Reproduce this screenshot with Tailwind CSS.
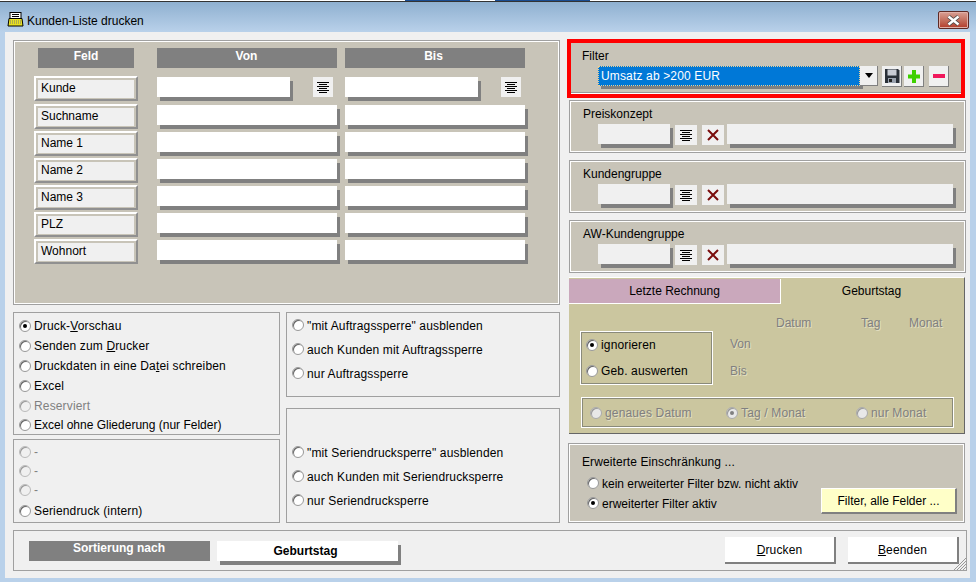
<!DOCTYPE html>
<html><head><meta charset="utf-8"><script src="https://cdn.jsdelivr.net/npm/@tailwindcss/browser@4"></script></head>
<body class="m-0 w-[976px] h-[582px] overflow-hidden bg-[#b9d1ea] font-['Liberation_Sans',Arial,sans-serif] text-[12px] leading-[14px] text-black">
<div class="h-[2px] bg-white border-b border-[#333] flex">
  <div class="ml-[405px] w-[65px] h-[1px] bg-[#1a4c90]"></div>
  <div class="ml-[25px] w-[95px] h-[1px] bg-[#1a4c90]"></div>
</div>
<!-- title bar -->
<div class="h-[30px] flex items-start bg-gradient-to-b from-[#8fb0d0] to-[#b9d1ea] relative">
  <svg class="ml-[7px] mt-[10px]" width="17" height="15" viewBox="0 0 17 15"><rect x="3" y="0.5" width="11" height="8" fill="#fff" stroke="#000"/><path d="M5 2.500h7M5 4.500h7M5 6.500h7" stroke="#000"/><path d="M2 6.500h13l1 7.500H1z" fill="#e8e020" stroke="#000"/><path d="M3 9h11M3 11h11" stroke="#777" stroke-dasharray="1 1"/></svg>
  <span class="ml-[3px] mt-[12px] text-[12px] leading-[14px] text-black">Kunden-Liste drucken</span>
  <div class="absolute left-[938px] top-[9px] w-[31px] h-[18px] rounded-[2px] border border-[#5e2a25] bg-gradient-to-b from-[#d8a095] via-[#c4705f] to-[#b33a2a] shadow-[inset_0_0_0_1px_#e0b0a8] flex items-center justify-center">
    <svg width="15" height="11" viewBox="0 0 15 11"><path d="M2.500 1.500l10 8M12.500 1.500l-10 8" stroke="#444" stroke-width="4"/><path d="M2.500 1.500l10 8M12.500 1.500l-10 8" stroke="#fff" stroke-width="2.500"/></svg>
  </div>
</div>
<!-- client -->
<div class="ml-[5px] w-[965px] h-[546px] bg-[#f0f0f0] relative">
  <div class="flex pt-[8px] pl-[8px]">
    <!-- LEFT COLUMN -->
    <div class="w-[547px] flex flex-col">
      <div class="w-[547px] h-[265px] bg-[#c8c4b8] border border-[#a0a0a0] shadow-[inset_0_0_0_1px_#fff] pt-[7px] pl-[24px]">
        <div class="flex text-white font-bold h-[20px] leading-[16px] text-center">
          <div class="w-[96px] bg-[#808080]">Feld</div>
          <div class="ml-[23px] w-[180px] pr-[1px] bg-[#808080]">Von</div>
          <div class="ml-[8px] w-[180px] pr-[3px] bg-[#808080]">Bis</div>
        </div>
        <div class="flex mt-[9px] h-[28px] -ml-[4px]">
          <div class="-mt-[1px] w-[104px] h-[25px] border-2 border-t-white border-l-white border-r-[#909090] border-b-[#909090] p-[2px]"><div class="bg-[#f0f0f0] h-[18px] pl-[3px] leading-[17px]">Kunde</div></div>
          <div class="ml-[19px] w-[133px] h-[20px] bg-white shadow-[3px_4px_0_0_#808080]"></div>
          <div class="ml-[23px] w-[20px] h-[20px] bg-[#f0f0f0] flex items-center justify-center"><svg width="12" height="12" viewBox="0 0 12 12"><path d="M0 1.500h12M2 3.500h8M0 5.500h12M2 7.500h8M0 9.500h12M2 11.500h8" stroke="#000"/></svg></div>
          <div class="ml-[12px] w-[133px] h-[20px] bg-white shadow-[3px_4px_0_0_#808080]"></div>
          <div class="ml-[23px] w-[20px] h-[20px] bg-[#f0f0f0] flex items-center justify-center"><svg width="12" height="12" viewBox="0 0 12 12"><path d="M0 1.500h12M2 3.500h8M0 5.500h12M2 7.500h8M0 9.500h12M2 11.500h8" stroke="#000"/></svg></div>
        </div>
        <div class="flex h-[27px] -ml-[4px]">
          <div class="-mt-[1px] w-[104px] h-[25px] border-2 border-t-white border-l-white border-r-[#909090] border-b-[#909090] p-[2px]"><div class="bg-[#f0f0f0] h-[18px] pl-[3px] leading-[17px]">Suchname</div></div>
          <div class="ml-[19px] w-[180px] h-[20px] bg-white shadow-[3px_4px_0_0_#808080]"></div>
          <div class="ml-[8px] w-[180px] h-[20px] bg-white shadow-[3px_4px_0_0_#808080]"></div>
        </div>
        <div class="flex h-[27px] -ml-[4px]">
          <div class="-mt-[1px] w-[104px] h-[25px] border-2 border-t-white border-l-white border-r-[#909090] border-b-[#909090] p-[2px]"><div class="bg-[#f0f0f0] h-[18px] pl-[3px] leading-[17px]">Name 1</div></div>
          <div class="ml-[19px] w-[180px] h-[20px] bg-white shadow-[3px_4px_0_0_#808080]"></div>
          <div class="ml-[8px] w-[180px] h-[20px] bg-white shadow-[3px_4px_0_0_#808080]"></div>
        </div>
        <div class="flex h-[27px] -ml-[4px]">
          <div class="-mt-[1px] w-[104px] h-[25px] border-2 border-t-white border-l-white border-r-[#909090] border-b-[#909090] p-[2px]"><div class="bg-[#f0f0f0] h-[18px] pl-[3px] leading-[17px]">Name 2</div></div>
          <div class="ml-[19px] w-[180px] h-[20px] bg-white shadow-[3px_4px_0_0_#808080]"></div>
          <div class="ml-[8px] w-[180px] h-[20px] bg-white shadow-[3px_4px_0_0_#808080]"></div>
        </div>
        <div class="flex h-[27px] -ml-[4px]">
          <div class="-mt-[1px] w-[104px] h-[25px] border-2 border-t-white border-l-white border-r-[#909090] border-b-[#909090] p-[2px]"><div class="bg-[#f0f0f0] h-[18px] pl-[3px] leading-[17px]">Name 3</div></div>
          <div class="ml-[19px] w-[180px] h-[20px] bg-white shadow-[3px_4px_0_0_#808080]"></div>
          <div class="ml-[8px] w-[180px] h-[20px] bg-white shadow-[3px_4px_0_0_#808080]"></div>
        </div>
        <div class="flex h-[27px] -ml-[4px]">
          <div class="-mt-[1px] w-[104px] h-[25px] border-2 border-t-white border-l-white border-r-[#909090] border-b-[#909090] p-[2px]"><div class="bg-[#f0f0f0] h-[18px] pl-[3px] leading-[17px]">PLZ</div></div>
          <div class="ml-[19px] w-[180px] h-[20px] bg-white shadow-[3px_4px_0_0_#808080]"></div>
          <div class="ml-[8px] w-[180px] h-[20px] bg-white shadow-[3px_4px_0_0_#808080]"></div>
        </div>
        <div class="flex h-[27px] -ml-[4px]">
          <div class="-mt-[1px] w-[104px] h-[25px] border-2 border-t-white border-l-white border-r-[#909090] border-b-[#909090] p-[2px]"><div class="bg-[#f0f0f0] h-[18px] pl-[3px] leading-[17px]">Wohnort</div></div>
          <div class="ml-[19px] w-[180px] h-[20px] bg-white shadow-[3px_4px_0_0_#808080]"></div>
          <div class="ml-[8px] w-[180px] h-[20px] bg-white shadow-[3px_4px_0_0_#808080]"></div>
        </div>
      </div>
      <div class="flex mt-[7px] gap-[6px] tracking-[0.15px]">
        <div class="w-[267px] flex flex-col gap-[4px]">
          <div class="h-[123px] border border-[#a0a0a0] pl-[5px] pt-[6px]">
            <div class="h-[20px] flex items-start"><span class="mt-[1px] w-[12px] h-[12px] rounded-full bg-white border border-[#999] shadow-[inset_1px_1px_0_#666] flex items-center justify-center"><span class="w-[4px] h-[4px] rounded-full bg-black"></span></span><span class="ml-[3px]">Druck-<u>V</u>orschau</span></div>
            <div class="h-[20px] flex items-start"><span class="mt-[1px] w-[12px] h-[12px] rounded-full bg-white border border-[#999] shadow-[inset_1px_1px_0_#666]"></span><span class="ml-[3px]">Senden zum <u>D</u>rucker</span></div>
            <div class="h-[20px] flex items-start"><span class="mt-[1px] w-[12px] h-[12px] rounded-full bg-white border border-[#999] shadow-[inset_1px_1px_0_#666]"></span><span class="ml-[3px]">Druckdaten in eine Da<u>t</u>ei schreiben</span></div>
            <div class="h-[20px] flex items-start"><span class="mt-[1px] w-[12px] h-[12px] rounded-full bg-white border border-[#999] shadow-[inset_1px_1px_0_#666]"></span><span class="ml-[3px]">Excel</span></div>
            <div class="h-[19px] flex items-start text-[#808080]"><span class="mt-[1px] w-[12px] h-[12px] rounded-full bg-[#f0f0f0] border border-[#bbb] shadow-[inset_1px_1px_0_#999]"></span><span class="ml-[3px]">Reserviert</span></div>
            <div class="h-[19px] flex items-start"><span class="mt-[1px] w-[12px] h-[12px] rounded-full bg-white border border-[#999] shadow-[inset_1px_1px_0_#666]"></span><span class="ml-[3px] tracking-normal">Excel ohne Gliederung (nur Felder)</span></div>
          </div>
          <div class="h-[84px] border border-[#a0a0a0] pl-[5px] pt-[5px]">
            <div class="h-[19px] flex items-start text-[#808080]"><span class="mt-[1px] w-[12px] h-[12px] rounded-full bg-[#f0f0f0] border border-[#bbb] shadow-[inset_1px_1px_0_#999]"></span><span class="ml-[3px]">-</span></div>
            <div class="h-[19px] flex items-start text-[#808080]"><span class="mt-[1px] w-[12px] h-[12px] rounded-full bg-[#f0f0f0] border border-[#bbb] shadow-[inset_1px_1px_0_#999]"></span><span class="ml-[3px]">-</span></div>
            <div class="h-[21px] flex items-start text-[#808080]"><span class="mt-[1px] w-[12px] h-[12px] rounded-full bg-[#f0f0f0] border border-[#bbb] shadow-[inset_1px_1px_0_#999]"></span><span class="ml-[3px]">-</span></div>
            <div class="h-[19px] flex items-start"><span class="mt-[1px] w-[12px] h-[12px] rounded-full bg-white border border-[#999] shadow-[inset_1px_1px_0_#666]"></span><span class="ml-[3px]">Seriendruck (intern)</span></div>
          </div>
        </div>
        <div class="w-[274px] flex flex-col gap-[11px]">
          <div class="h-[85px] border border-[#a0a0a0] pl-[5px] pt-[6px]">
            <div class="h-[24px] flex items-start"><span class="w-[12px] h-[12px] rounded-full bg-white border border-[#999] shadow-[inset_1px_1px_0_#666]"></span><span class="ml-[3px]">"mit Auftragssperre" ausblenden</span></div>
            <div class="h-[24px] flex items-start"><span class="w-[12px] h-[12px] rounded-full bg-white border border-[#999] shadow-[inset_1px_1px_0_#666]"></span><span class="ml-[3px]">auch Kunden mit Auftragssperre</span></div>
            <div class="h-[24px] flex items-start"><span class="w-[12px] h-[12px] rounded-full bg-white border border-[#999] shadow-[inset_1px_1px_0_#666]"></span><span class="ml-[3px]">nur Auftragssperre</span></div>
          </div>
          <div class="h-[115px] border border-[#a0a0a0] pl-[5px] pt-[37px]">
            <div class="h-[24px] flex items-start"><span class="w-[12px] h-[12px] rounded-full bg-white border border-[#999] shadow-[inset_1px_1px_0_#666]"></span><span class="ml-[3px]">"mit Seriendrucksperre" ausblenden</span></div>
            <div class="h-[24px] flex items-start"><span class="w-[12px] h-[12px] rounded-full bg-white border border-[#999] shadow-[inset_1px_1px_0_#666]"></span><span class="ml-[3px]">auch Kunden mit Seriendrucksperre</span></div>
            <div class="h-[24px] flex items-start"><span class="w-[12px] h-[12px] rounded-full bg-white border border-[#999] shadow-[inset_1px_1px_0_#666]"></span><span class="ml-[3px]">nur Seriendrucksperre</span></div>
          </div>
        </div>
      </div>
    </div>
    <!-- RIGHT COLUMN -->
    <div class="ml-[8px] w-[398px] flex flex-col -mt-[1px]">
      <div class="-ml-[1px] w-[398px] h-[59px] border-4 border-[#ff0000] bg-[#c8c4b8] pl-[11px] pt-[6px] relative">
        <div>Filter</div>
        <div class="flex items-start mt-[3px] ml-[16px]">
          <div class="w-[262px] h-[20px] bg-[#0078d7] border border-dotted border-[#f0d090] text-white pl-[2px] leading-[19px] tracking-[0.15px] shadow-[3px_3px_0_#808080]">Umsatz ab &gt;200 EUR</div>
          <div class="w-[18px] h-[20px] bg-[#f0f0f0] border-b border-r border-[#808080] flex items-center justify-center z-10"><svg width="8" height="5" viewBox="0 0 8 5"><path d="M0 0h8L4 5z" fill="#000"/></svg></div>
          <div class="ml-[4px] w-[20px] h-[21px] bg-[#f0f0f0] border-b border-r border-[#808080] flex items-center justify-center"><svg width="16" height="16" viewBox="0 0 16 16"><path d="M1 1h13l1.500 1.500V15H1z" fill="#2a3038"/><rect x="3.500" y="1.500" width="9" height="6" fill="#c8ccd4"/><rect x="4" y="10" width="8" height="5" fill="#9aa2ae"/><rect x="5" y="11" width="3" height="3" fill="#222"/></svg></div>
          <div class="ml-[2px] w-[20px] h-[21px] bg-[#f0f0f0] border-b border-r border-[#808080] flex items-center justify-center"><svg width="12" height="13" viewBox="0 0 12 13"><path d="M4 0h4v4.500h4v4H8V13H4V8.500H0v-4h4z" fill="#3fd000"/></svg></div>
          <div class="ml-[5px] w-[20px] h-[21px] bg-[#f0f0f0] border-b border-r border-[#808080] flex items-center justify-center"><svg width="12" height="4" viewBox="0 0 12 4"><rect width="12" height="4" fill="#f0185c"/></svg></div>
        </div>
        <div class="absolute left-0 right-0 bottom-0 h-[2px] bg-[#999] border-b border-white"></div>
      </div>
      <div class="mt-[2px] ml-[1px] w-[397px] h-[53px] bg-[#c8c4b8] border border-[#a0a0a0] shadow-[inset_0_0_0_1px_#fff] pl-[13px] pt-[6px]">
        <div>Preiskonzept</div>
        <div class="flex items-start mt-[3px] ml-[15px]">
          <div class="w-[72px] h-[20px] bg-[#f0f0f0] shadow-[3px_4px_0_#808080]"></div>
          <div class="mt-[1px] ml-[5px] w-[22px] h-[20px] bg-[#f0f0f0] flex items-center justify-center"><svg width="12" height="12" viewBox="0 0 12 12"><path d="M0 1.500h12M2 3.500h8M0 5.500h12M2 7.500h8M0 9.500h12M2 11.500h8" stroke="#000"/></svg></div>
          <div class="mt-[1px] ml-[5px] w-[22px] h-[20px] bg-[#f0f0f0] flex items-center justify-center"><svg width="12" height="12" viewBox="0 0 12 12"><path d="M1 1l10 10M11 1L1 11" stroke="#7a0c0c" stroke-width="2"/></svg></div>
          <div class="ml-[3px] w-[226px] h-[20px] bg-[#f0f0f0] shadow-[3px_4px_0_#808080]"></div>
        </div>
      </div>
      <div class="mt-[7px] ml-[1px] w-[397px] h-[53px] bg-[#c8c4b8] border border-[#a0a0a0] shadow-[inset_0_0_0_1px_#fff] pl-[13px] pt-[6px]">
        <div>Kundengruppe</div>
        <div class="flex items-start mt-[3px] ml-[15px]">
          <div class="w-[72px] h-[20px] bg-[#f0f0f0] shadow-[3px_4px_0_#808080]"></div>
          <div class="mt-[1px] ml-[5px] w-[22px] h-[20px] bg-[#f0f0f0] flex items-center justify-center"><svg width="12" height="12" viewBox="0 0 12 12"><path d="M0 1.500h12M2 3.500h8M0 5.500h12M2 7.500h8M0 9.500h12M2 11.500h8" stroke="#000"/></svg></div>
          <div class="mt-[1px] ml-[5px] w-[22px] h-[20px] bg-[#f0f0f0] flex items-center justify-center"><svg width="12" height="12" viewBox="0 0 12 12"><path d="M1 1l10 10M11 1L1 11" stroke="#7a0c0c" stroke-width="2"/></svg></div>
          <div class="ml-[3px] w-[226px] h-[20px] bg-[#f0f0f0] shadow-[3px_4px_0_#808080]"></div>
        </div>
      </div>
      <div class="mt-[7px] ml-[1px] w-[397px] h-[53px] bg-[#c8c4b8] border border-[#a0a0a0] shadow-[inset_0_0_0_1px_#fff] pl-[13px] pt-[6px]">
        <div>AW-Kundengruppe</div>
        <div class="flex items-start mt-[3px] ml-[15px]">
          <div class="w-[72px] h-[20px] bg-[#f0f0f0] shadow-[3px_4px_0_#808080]"></div>
          <div class="mt-[1px] ml-[5px] w-[22px] h-[20px] bg-[#f0f0f0] flex items-center justify-center"><svg width="12" height="12" viewBox="0 0 12 12"><path d="M0 1.500h12M2 3.500h8M0 5.500h12M2 7.500h8M0 9.500h12M2 11.500h8" stroke="#000"/></svg></div>
          <div class="mt-[1px] ml-[5px] w-[22px] h-[20px] bg-[#f0f0f0] flex items-center justify-center"><svg width="12" height="12" viewBox="0 0 12 12"><path d="M1 1l10 10M11 1L1 11" stroke="#7a0c0c" stroke-width="2"/></svg></div>
          <div class="ml-[3px] w-[226px] h-[20px] bg-[#f0f0f0] shadow-[3px_4px_0_#808080]"></div>
        </div>
      </div>
      <!-- tabs -->
      <div class="mt-[4px] ml-[1px] w-[396px] h-[157px] bg-[#cbc69f] border-r border-b border-[#666] relative border-t border-t-white">
        <div class="absolute left-0 top-[1px] w-[212px] h-[25px] bg-[#caa8bc] border-b border-r border-white flex items-center justify-center">Letzte Rechnung</div>
        <div class="absolute left-[212px] top-[6px] w-[181px] text-center">Geburtstag</div>
        <div class="absolute left-[207px] top-[38px] text-[#808080] [text-shadow:1px_1px_0_#e4e0c4]">Datum</div>
        <div class="absolute left-[292px] top-[38px] text-[#808080] [text-shadow:1px_1px_0_#e4e0c4]">Tag</div>
        <div class="absolute left-[340px] top-[38px] text-[#808080] [text-shadow:1px_1px_0_#e4e0c4]">Monat</div>
        <div class="absolute left-[161px] top-[59px] text-[#808080] [text-shadow:1px_1px_0_#e4e0c4]">Von</div>
        <div class="absolute left-[161px] top-[86px] text-[#808080] [text-shadow:1px_1px_0_#e4e0c4]">Bis</div>
        <div class="absolute left-[11px] top-[53px] w-[133px] h-[54px] border border-white outline outline-1 outline-[#8a8a7a] -outline-offset-2 pl-[5px] pt-[6px]">
          <div class="h-[26px] flex items-start"><span class="w-[12px] h-[12px] mt-[1px] rounded-full bg-white border border-[#999] shadow-[inset_1px_1px_0_#666] flex items-center justify-center"><span class="w-[4px] h-[4px] rounded-full bg-black"></span></span><span class="ml-[3px] tracking-[0.15px]">ignorieren</span></div>
          <div class="h-[20px] flex items-start"><span class="w-[12px] h-[12px] mt-[1px] rounded-full bg-white border border-[#999] shadow-[inset_1px_1px_0_#666]"></span><span class="ml-[3px] tracking-[0.15px]">Geb. auswerten</span></div>
        </div>
        <div class="absolute left-[12px] top-[119px] w-[373px] h-[31px] border border-white outline outline-1 outline-[#8a8a7a] -outline-offset-2 flex items-center text-[#808080] [text-shadow:1px_1px_0_#e4e0c4]">
          <span class="ml-[8px] w-[12px] h-[12px] rounded-full bg-[#e8e8e8] border border-[#aaa] shadow-[inset_1px_1px_0_#999]"></span><span class="ml-[3px] w-[121px] tracking-[0.15px]">genaues Datum</span>
          <span class="w-[12px] h-[12px] rounded-full bg-[#e8e8e8] border border-[#aaa] shadow-[inset_1px_1px_0_#999] flex items-center justify-center"><span class="w-[4px] h-[4px] rounded-full bg-[#808080]"></span></span><span class="ml-[3px] w-[115px] tracking-[0.15px]">Tag / Monat</span>
          <span class="w-[12px] h-[12px] rounded-full bg-[#e8e8e8] border border-[#aaa] shadow-[inset_1px_1px_0_#999]"></span><span class="ml-[3px] tracking-[0.15px]">nur Monat</span>
        </div>
      </div>
      <!-- erweitert -->
      <div class="mt-[9px] w-[397px] h-[80px] bg-[#c8c4b8] border border-[#a0a0a0] shadow-[inset_0_0_0_1px_#fff] relative pl-[13px] pt-[11px]">
        <div class="tracking-[0.1px]">Erweiterte Einschränkung ...</div>
        <div class="flex items-start mt-[8px] ml-[5px] h-[20px]"><span class="w-[12px] h-[12px] rounded-full bg-white border border-[#999] shadow-[inset_1px_1px_0_#666]"></span><span class="ml-[3px]">kein erweiterter Filter bzw. nicht aktiv</span></div>
        <div class="flex items-start ml-[5px]"><span class="w-[12px] h-[12px] rounded-full bg-white border border-[#999] shadow-[inset_1px_1px_0_#666] flex items-center justify-center"><span class="w-[4px] h-[4px] rounded-full bg-black"></span></span><span class="ml-[3px]">erweiterter Filter aktiv</span></div>
        <div class="absolute left-[252px] top-[44px] w-[136px] h-[26px] bg-[#ffffc8] border border-t-white border-l-white border-r-[#808080] border-b-[#808080] border-r-2 border-b-2 flex items-center justify-center">Filter, alle Felder ...</div>
      </div>
    </div>
  </div>
  <!-- bottom bar -->
  <div class="ml-[8px] mt-[7px] w-[954px] h-[41px] border border-[#a0a0a0] flex items-center relative">
    <div class="ml-[15px] w-[181px] h-[20px] bg-[#808080] text-white font-bold text-center leading-[15px] pr-[1px]">Sortierung nach</div>
    <div class="ml-[7px] w-[181px] h-[20px] bg-white font-bold text-center leading-[20px] pr-[4px] shadow-[3px_4px_0_#808080]">Geburtstag</div>
    <div class="ml-auto w-[111px] h-[27px] bg-white border-r-2 border-b-2 border-[#808080] flex items-center justify-center"><span class="tracking-[0.15px]"><u>D</u>rucken</span></div>
    <div class="ml-[12px] mr-[7px] w-[111px] h-[27px] bg-white border-r-2 border-b-2 border-[#808080] flex items-center justify-center"><span class="tracking-[0.15px]"><u>B</u>eenden</span></div>
    <svg class="absolute right-0 bottom-0" width="12" height="12" viewBox="0 0 12 12"><path d="M12 0L0 12M12 3L3 12M12 6L6 12M12 9L9 12" stroke="#999"/></svg>
  </div>
</div>
</body></html>
